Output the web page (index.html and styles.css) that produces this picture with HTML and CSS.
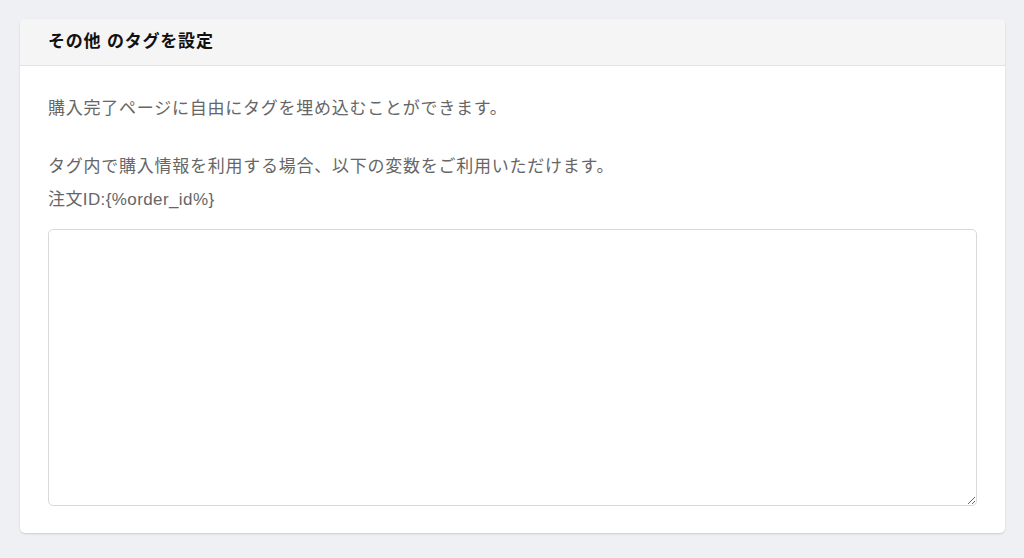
FILE: index.html
```html
<!DOCTYPE html>
<html lang="ja">
<head>
<meta charset="utf-8">
<link rel="stylesheet" href="styles.css">
</head>
<body>
<section class="panel">
  <header class="panel-head">その他 のタグを設定</header>
  <div class="panel-body">
    <p class="lead">購入完了ページに自由にタグを埋め込むことができます。</p>
    <p class="vars">タグ内で購入情報を利用する場合、以下の変数をご利用いただけます。<br><span class="var-name">注文ID:{%order_id%}</span></p>
    <textarea class="tag-input"></textarea>
  </div>
</section>
</body>
</html>
```
FILE: styles.css
```css
html, body {
  margin: 0;
  padding: 0;
  background: #eff0f4;
  font-family: "Liberation Sans", "Noto Sans CJK JP", sans-serif;
}
body {
  padding: 19px 19px 24px 20px;
}
.panel {
  background: #fff;
  border-radius: 5px;
  box-shadow: 0 1px 2px rgba(0,0,0,0.15);
  overflow: hidden;
}
.panel-head {
  background: #f5f5f5;
  border-bottom: 1px solid #e3e3e3;
  height: 47px;
  box-sizing: border-box;
  padding: 0 28px;
  line-height: 46px;
  font-size: 17px;
  letter-spacing: 0.8px;
  font-weight: bold;
  color: #111;
}
.panel-body {
  padding: 26px 28px 27px;
  color: #666;
  font-size: 17px;
  letter-spacing: 0.75px;
}
.panel-body p {
  margin: 0;
  line-height: 33px;
}
.lead {
  margin-bottom: 25px !important;
}
.vars {
  margin-bottom: 13px !important;
}
.var-name {
  letter-spacing: 0.4px;
}
.tag-input {
  display: block;
  width: 100%;
  height: 277px;
  box-sizing: border-box;
  border: 1px solid #d9d9d9;
  border-radius: 5px;
  resize: vertical;
  font-family: inherit;
}
```
